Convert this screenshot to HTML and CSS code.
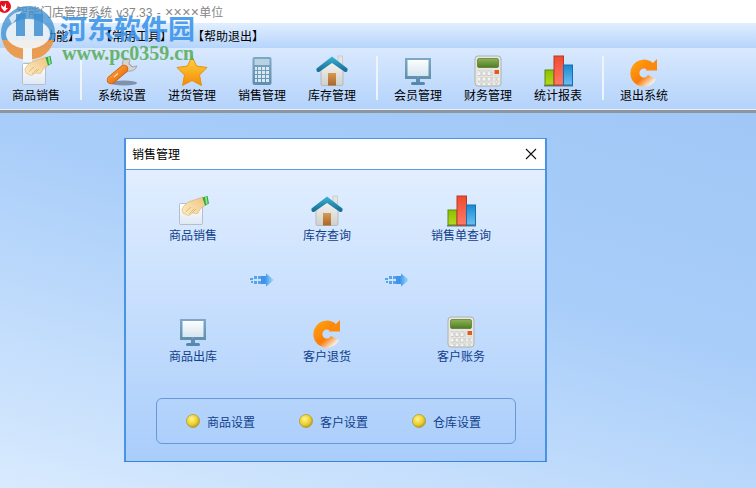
FILE: index.html
```html
<!DOCTYPE html>
<html lang="zh-CN">
<head>
    <meta charset="UTF-8">
    <title>智能门店管理系统</title>
    <link rel="stylesheet" href="styles.css">
</head>
<body>

    <!-- 图标 -->
    <svg class="icon-defs" xmlns="http://www.w3.org/2000/svg">
        <defs>
            <linearGradient id="g-paper" x1="0" y1="0" x2="0" y2="1"><stop offset="0" stop-color="#ffffff"/><stop offset="1" stop-color="#dfe8f2"/></linearGradient>
            <linearGradient id="g-hand" x1="0" y1="1" x2="1" y2="0"><stop offset="0" stop-color="#fdeec6"/><stop offset="1" stop-color="#eec27e"/></linearGradient>
            <linearGradient id="g-orange" x1="0" y1="0" x2="1" y2="1"><stop offset="0" stop-color="#ffa53a"/><stop offset="1" stop-color="#e8660c"/></linearGradient>
            <linearGradient id="g-star" x1="0" y1="0" x2="0" y2="1"><stop offset="0" stop-color="#ffd640"/><stop offset="1" stop-color="#f48a08"/></linearGradient>
            <linearGradient id="g-steel" x1="0" y1="0" x2="0" y2="1"><stop offset="0" stop-color="#7ea8c6"/><stop offset="1" stop-color="#5f8fae"/></linearGradient>
            <linearGradient id="g-roof" x1="0" y1="0" x2="0" y2="1"><stop offset="0" stop-color="#3cb4d8"/><stop offset="1" stop-color="#14688e"/></linearGradient>
            <linearGradient id="g-wall" x1="0" y1="0" x2="0" y2="1"><stop offset="0" stop-color="#f4f4f2"/><stop offset="1" stop-color="#cfcfcc"/></linearGradient>
            <linearGradient id="g-door" x1="0" y1="0" x2="0" y2="1"><stop offset="0" stop-color="#d89a50"/><stop offset="1" stop-color="#a8662a"/></linearGradient>
            <linearGradient id="g-screen" x1="0" y1="0" x2="0" y2="1"><stop offset="0" stop-color="#fbfdfe"/><stop offset="1" stop-color="#d6e6f0"/></linearGradient>
            <linearGradient id="g-lcd" x1="0" y1="0" x2="0" y2="1"><stop offset="0" stop-color="#8db356"/><stop offset="1" stop-color="#4f7d22"/></linearGradient>
            <linearGradient id="g-red" x1="0" y1="0" x2="0" y2="1"><stop offset="0" stop-color="#ef4a30"/><stop offset="1" stop-color="#ff7a68"/></linearGradient>
            <linearGradient id="g-blue" x1="0" y1="0" x2="0" y2="1"><stop offset="0" stop-color="#1c88d0"/><stop offset="1" stop-color="#6cc0f0"/></linearGradient>
            <linearGradient id="g-green" x1="0" y1="0" x2="0" y2="1"><stop offset="0" stop-color="#8cc000"/><stop offset="1" stop-color="#b4d820"/></linearGradient>
            <linearGradient id="g-back" gradientUnits="userSpaceOnUse" x1="9" y1="9" x2="26" y2="28"><stop offset="0" stop-color="#ff9a10"/><stop offset=".55" stop-color="#fb7c08"/><stop offset=".95" stop-color="#f6efe8"/></linearGradient>
            <linearGradient id="g-arrow" x1="0" y1="0" x2="1" y2="0"><stop offset="0" stop-color="#3f94ea"/><stop offset="1" stop-color="#a8e0fc"/></linearGradient>
            <radialGradient id="g-dot" cx=".4" cy=".35" r=".7"><stop offset="0" stop-color="#fff58a"/><stop offset=".6" stop-color="#ecd030"/><stop offset="1" stop-color="#b09418"/></radialGradient>
            <pattern id="p-keys" width="4" height="4" patternUnits="userSpaceOnUse"><rect width="3" height="3" fill="#dce8f0"/></pattern>
            <pattern id="p-gkeys" width="5" height="5.5" patternUnits="userSpaceOnUse"><rect width="4" height="4" rx=".6" fill="#f6f6f4" stroke="#a6a6a2" stroke-width=".6"/></pattern>

            <symbol id="i-hand" viewBox="0 0 32 32">
                <rect x="2.5" y="8.5" width="23" height="21" rx="1" fill="url(#g-paper)" stroke="#b4bfca"/>
                <path d="M5 14.5 Q8 7.5 14 6 L26 2 L29 10 L24 13 L20.5 18.5 L15.5 18 L11.5 20.5 L8 19 L6 18 Z" fill="url(#g-hand)" stroke="#dcae68" stroke-width=".6"/>
                <path d="M8.5 17 L14 12 M12 19 L17 14 M15.5 17.5 L19 14" stroke="#d9a85f" stroke-width=".7" fill="none"/>
                <path d="M25.5 2.5 L30.5 .8 L32 8.5 L28 10.8 Z" fill="#2fa83c"/>
                <path d="M27.8 1.8 L29.6 1.2 L30.8 8.6 L29 9.6 Z" fill="#8ee08e"/>
            </symbol>
            <symbol id="i-wrench" viewBox="0 0 32 32">
                <ellipse cx="18" cy="28" rx="13" ry="2.5" fill="#5a6a80" opacity=".65"/>
                <path d="M19 16 L25 10" stroke="#a8a8a8" stroke-width="5"/>
                <path d="M19 3 A7.5 7.5 0 1 0 31 11 L26 12 L23 9 L24 4 Z" fill="#d4d4d2" stroke="#989896" stroke-width=".8"/>
                <path d="M5 25 L18 14" stroke="#c65a08" stroke-width="8.5" stroke-linecap="round"/>
                <path d="M5 25 L18 14" stroke="url(#g-orange)" stroke-width="7" stroke-linecap="round"/>
                <path d="M8 22 L12 18.5" stroke="#ffd9a8" stroke-width="1.2"/>
            </symbol>
            <symbol id="i-star" viewBox="0 0 32 32">
                <path d="M16 1.5 L20.5 11 L31 12.5 L23.5 20 L25.5 30.5 L16 25.5 L6.5 30.5 L8.5 20 L1 12.5 L11.5 11 Z" fill="url(#g-star)" stroke="#e89010" stroke-linejoin="round"/>
            </symbol>
            <symbol id="i-calc-blue" viewBox="0 0 32 32">
                <rect x="6.5" y="2" width="19" height="28" rx="2" fill="url(#g-steel)"/>
                <rect x="8.5" y="4" width="15" height="6" fill="#b9d2e2"/>
                <rect x="9" y="12" width="15" height="16" fill="url(#p-keys)"/>
            </symbol>
            <symbol id="i-house" viewBox="0 0 32 32">
                <rect x="22" y="1" width="4.5" height="11" fill="#e4e4e2" stroke="#bdbdbb" stroke-width=".6"/>
                <path d="M5 15 L16 6 L27 15 V29 Q27 30.5 25.5 30.5 H6.5 Q5 30.5 5 29 Z" fill="url(#g-wall)" stroke="#aeaeac" stroke-width=".7"/>
                <rect x="12" y="18" width="8" height="12.5" fill="url(#g-door)"/>
                <path d="M.5 13.5 L16 1.5 L31.5 13.5 Q32 17.5 29 17 L16 8 L3 17 Q0 17.5 .5 13.5 Z" fill="url(#g-roof)"/>
            </symbol>
            <symbol id="i-monitor" viewBox="0 0 32 32">
                <rect x="3" y="3" width="26" height="21" fill="url(#g-steel)"/>
                <rect x="5.5" y="5" width="21" height="16" fill="url(#g-screen)"/>
                <rect x="15" y="21" width="2" height="1.5" fill="#6f9fc0"/>
                <rect x="14" y="24" width="4" height="3" fill="#5f8fae"/>
                <rect x="9" y="27" width="14" height="3" rx="1.5" fill="#5488ad"/>
            </symbol>
            <symbol id="i-calc" viewBox="0 0 32 32">
                <rect x="3" y="1" width="26" height="30" rx="3" fill="#e6e6e2" stroke="#b0b0ac"/>
                <rect x="5.5" y="3.5" width="21" height="9" rx="1.5" fill="url(#g-lcd)" stroke="#456a1c" stroke-width=".6"/>
                <rect x="6" y="15" width="15" height="15" fill="url(#p-gkeys)"/>
                <rect x="22.5" y="15" width="4.5" height="4" fill="#e25a1c"/>
                <rect x="22.5" y="20.5" width="4.5" height="9.5" fill="url(#p-gkeys)"/>
            </symbol>
            <symbol id="i-bars" viewBox="0 0 32 32">
                <rect x="2" y="30" width="29" height="1.5" fill="#687484"/>
                <rect x="3" y="15" width="9" height="15" fill="url(#g-green)" stroke="#5e8a10"/>
                <rect x="12" y="1" width="9.5" height="29" fill="url(#g-red)" stroke="#b83a24"/>
                <rect x="21.5" y="10" width="9" height="20" fill="url(#g-blue)" stroke="#1470b0"/>
            </symbol>
            <symbol id="i-back" viewBox="0 0 32 32">
                <path d="M22 11.5 A9 9 0 1 0 24 22" fill="none" stroke="url(#g-back)" stroke-width="9"/>
                <path d="M29 4 V15.5 H17.5 Z" fill="#fb8a0c"/>
            </symbol>
            <symbol id="i-arrow" viewBox="0 0 24 14">
                <path d="M0 5h3v2h-3zM4 3h3v3h-3zM8 3h3v3h-3zM4 8h3v3h-3zM8 8h3v3h-3zM1 8h2v2h-2z" fill="#58a4ec"/>
                <rect x="11" y="3" width="4" height="8" fill="#3f94ea"/>
                <path d="M15 3 H16 V0.5 L24 7 L16 13.5 V11 H15 Z" fill="url(#g-arrow)"/>
            </symbol>
        </defs>
    </svg>

    <div class="window">
        <div class="titlebar">
            <svg class="app-logo" viewBox="0 0 12 12">
                <circle cx="4.5" cy="5.5" r="6.5" fill="#e8101c"/>
                <path d="M1 4 L4 6 L6 2 L6 7 L8 7 L4.5 10.5 L1.5 7 Z" fill="#ffffff"/>
            </svg>
            <span>智能门店管理系统 v37.33 - <span class="mask">××××</span>单位</span>
        </div>

        <div class="menubar">
            <span class="menu-item">【系统功能】</span>
            <span class="menu-item">【常用工具】</span>
            <span class="menu-item">【帮助退出】</span>
        </div>

        <div class="toolbar">
            <div class="tool"><svg class="icon"><use href="#i-hand"/></svg><span>商品销售</span></div>
            <i class="tool-sep"></i>
            <div class="tool"><svg class="icon"><use href="#i-wrench"/></svg><span>系统设置</span></div>
            <div class="tool"><svg class="icon"><use href="#i-star"/></svg><span>进货管理</span></div>
            <div class="tool"><svg class="icon"><use href="#i-calc-blue"/></svg><span>销售管理</span></div>
            <div class="tool"><svg class="icon"><use href="#i-house"/></svg><span>库存管理</span></div>
            <i class="tool-sep"></i>
            <div class="tool"><svg class="icon"><use href="#i-monitor"/></svg><span>会员管理</span></div>
            <div class="tool"><svg class="icon"><use href="#i-calc"/></svg><span>财务管理</span></div>
            <div class="tool"><svg class="icon"><use href="#i-bars"/></svg><span>统计报表</span></div>
            <i class="tool-sep"></i>
            <div class="tool"><svg class="icon"><use href="#i-back"/></svg><span>退出系统</span></div>
        </div>

        <div class="workspace">
            <!-- 销售管理窗口 -->
            <div class="dialog">
                <div class="dialog-title">
                    <span>销售管理</span>
                    <svg class="close" viewBox="0 0 12 12"><path d="M1 1 L11 11 M11 1 L1 11" stroke="#111" stroke-width="1.1" fill="none"/></svg>
                </div>
                <div class="dialog-body">
                    <div class="func-row">
                        <div class="func"><svg class="icon"><use href="#i-hand"/></svg><span>商品销售</span></div>
                        <div class="func"><svg class="icon"><use href="#i-house"/></svg><span>库存查询</span></div>
                        <div class="func"><svg class="icon"><use href="#i-bars"/></svg><span>销售单查询</span></div>
                    </div>
                    <div class="arrows">
                        <svg class="arrow"><use href="#i-arrow"/></svg>
                        <svg class="arrow"><use href="#i-arrow"/></svg>
                    </div>
                    <div class="func-row">
                        <div class="func"><svg class="icon"><use href="#i-monitor"/></svg><span>商品出库</span></div>
                        <div class="func"><svg class="icon"><use href="#i-back"/></svg><span>客户退货</span></div>
                        <div class="func"><svg class="icon"><use href="#i-calc"/></svg><span>客户账务</span></div>
                    </div>
                    <div class="settings">
                        <div class="setting"><svg class="dot" viewBox="0 0 14 14"><circle cx="7" cy="7" r="6.5" fill="url(#g-dot)" stroke="#b09a30" stroke-width=".8"/></svg><span>商品设置</span></div>
                        <div class="setting"><svg class="dot" viewBox="0 0 14 14"><circle cx="7" cy="7" r="6.5" fill="url(#g-dot)" stroke="#b09a30" stroke-width=".8"/></svg><span>客户设置</span></div>
                        <div class="setting"><svg class="dot" viewBox="0 0 14 14"><circle cx="7" cy="7" r="6.5" fill="url(#g-dot)" stroke="#b09a30" stroke-width=".8"/></svg><span>仓库设置</span></div>
                    </div>
                </div>
            </div>
        </div>
    </div>

    <!-- 水印 -->
    <div class="watermark">
        <svg class="wm-logo" viewBox="0 0 58 60">
            <path d="M1 29 A27 27 0 0 1 55 29 Q55 33 54 36 L2 36 Q1 33 1 29 Z" fill="#3f8fd0" opacity=".78"/>
            <path d="M2 36 H54 A27 27 0 0 1 41 53 Q28 58 15 53 A27 27 0 0 1 2 36 Z" fill="#ec9440" opacity=".9"/>
            <ellipse cx="28" cy="30" rx="22" ry="15" fill="#f2f5f8" opacity=".92"/>
            <path d="M9 14 Q14 8 22 7 L12 20 Z" fill="#e8f0f8" opacity=".85"/>
            <path d="M16 10 H25 V32 H16 Z M34 10 H43 V32 H34 Z" fill="#3f8fd0" opacity=".85"/>
            <path d="M23 44 H32 V58 H23 Z" fill="#f2f5f8"/>
        </svg>
        <div class="wm-name">河东软件园</div>
        <div class="wm-url">www.pc0359.cn</div>
    </div>

</body>
</html>
```

FILE: styles.css
```css
* {
    margin: 0;
    padding: 0;
    box-sizing: border-box;
}

html,
body {
    height: 100%;
    overflow: hidden;
}

body {
    position: relative;
    font-family: "Noto Sans CJK SC", "Liberation Sans", sans-serif;
    font-size: 12px;
    color: #000;
    background: #fff;
}

.icon-defs {
    position: absolute;
    width: 0;
    height: 0;
}

.window {
    display: flex;
    flex-direction: column;
    height: 100%;
}

/* 标题栏 */
.titlebar {
    display: flex;
    align-items: center;
    height: 23px;
    background: #fff;
    color: #868686;
    font-family: "Liberation Sans", "Noto Sans CJK SC", sans-serif;
    font-size: 12px;
    word-spacing: 1px;
}

.mask {
    font-size: 14px;
    letter-spacing: .4px;
}

.app-logo {
    width: 12px;
    height: 12px;
    margin: -10px 4px 0 0;
}

.menubar {
    display: flex;
    align-items: center;
    height: 25px;
    padding-left: 8px;
    gap: 23px;
    background: linear-gradient(#e0eeff, #b6d4fc);
    color: #000;
    font-size: 12px;
}

.menu-item {
    width: 69px;
    white-space: nowrap;
}

/* 工具栏 */
.toolbar {
    display: flex;
    height: 65px;
    padding: 7px 0 0 1px;
    background: linear-gradient(#d9e9fe, #b3d2fb);
    border-bottom: 3px solid #8f959e;
    box-shadow: inset 0 -1px 0 #eaeff5;
}

.tool {
    display: flex;
    flex-direction: column;
    align-items: center;
    width: 70px;
}

.tool span {
    line-height: 16px;
}

.tool-sep {
    width: 2px;
    height: 44px;
    margin: 1px 5px 0 9px;
    background: #eef4fb;
}

.icon {
    display: block;
    width: 32px;
    height: 32px;
}

/* 工作区 */
.workspace {
    flex: 1;
    padding: 25px 0 0 124px;
    background: linear-gradient(197deg, #a0c7f6 0%, #a8cdf9 40%, #d8eafe 100%);
}

.dialog {
    width: 423px;
    height: 324px;
    border: 2px solid #4a92e2;
    border-top-width: 1px;
    border-bottom-color: #3a84d6;
}

.dialog-title {
    display: flex;
    align-items: center;
    justify-content: space-between;
    height: 31px;
    padding: 0 8px 1px 6px;
    background: #fff;
    border-bottom: 1px solid #5b9be2;
}

.close {
    width: 12px;
    height: 12px;
}

.dialog-body {
    height: 291px;
    padding-top: 25px;
    background: linear-gradient(#e1eeff, #a9cdfb);
    color: #113f8c;
}

.func-row {
    display: grid;
    grid-template-columns: repeat(3, 134px);
}

.func {
    display: flex;
    flex-direction: column;
    align-items: center;
}

.func span {
    line-height: 16px;
}

.arrows {
    display: flex;
    gap: 111px;
    padding: 30px 0 29px 124px;
}

.arrow {
    display: block;
    width: 24px;
    height: 14px;
}

.settings {
    display: flex;
    width: 360px;
    height: 46px;
    margin: 34px 0 0 30px;
    padding-left: 29px;
    border: 1px solid #6a97d8;
    border-radius: 6px;
}

.setting {
    display: flex;
    flex: none;
    align-items: center;
    gap: 7px;
    width: 113px;
}

.dot {
    width: 14px;
    height: 14px;
}

/* 水印 */
.watermark {
    position: absolute;
    top: 0;
    left: 0;
    width: 200px;
    height: 66px;
    pointer-events: none;
}

.wm-logo {
    position: absolute;
    left: 0;
    top: 4px;
    width: 58px;
    height: 60px;
}

.wm-name {
    position: absolute;
    left: 60px;
    top: 8px;
    font-size: 27px;
    line-height: 40px;
    font-weight: 700;
    color: #3e95e8;
    opacity: .9;
    white-space: nowrap;
}

.wm-url {
    position: absolute;
    left: 62px;
    top: 41px;
    font-family: "Liberation Serif", serif;
    font-size: 20px;
    line-height: 24px;
    font-weight: 700;
    color: #5cae60;
    opacity: .9;
    white-space: nowrap;
}
```
